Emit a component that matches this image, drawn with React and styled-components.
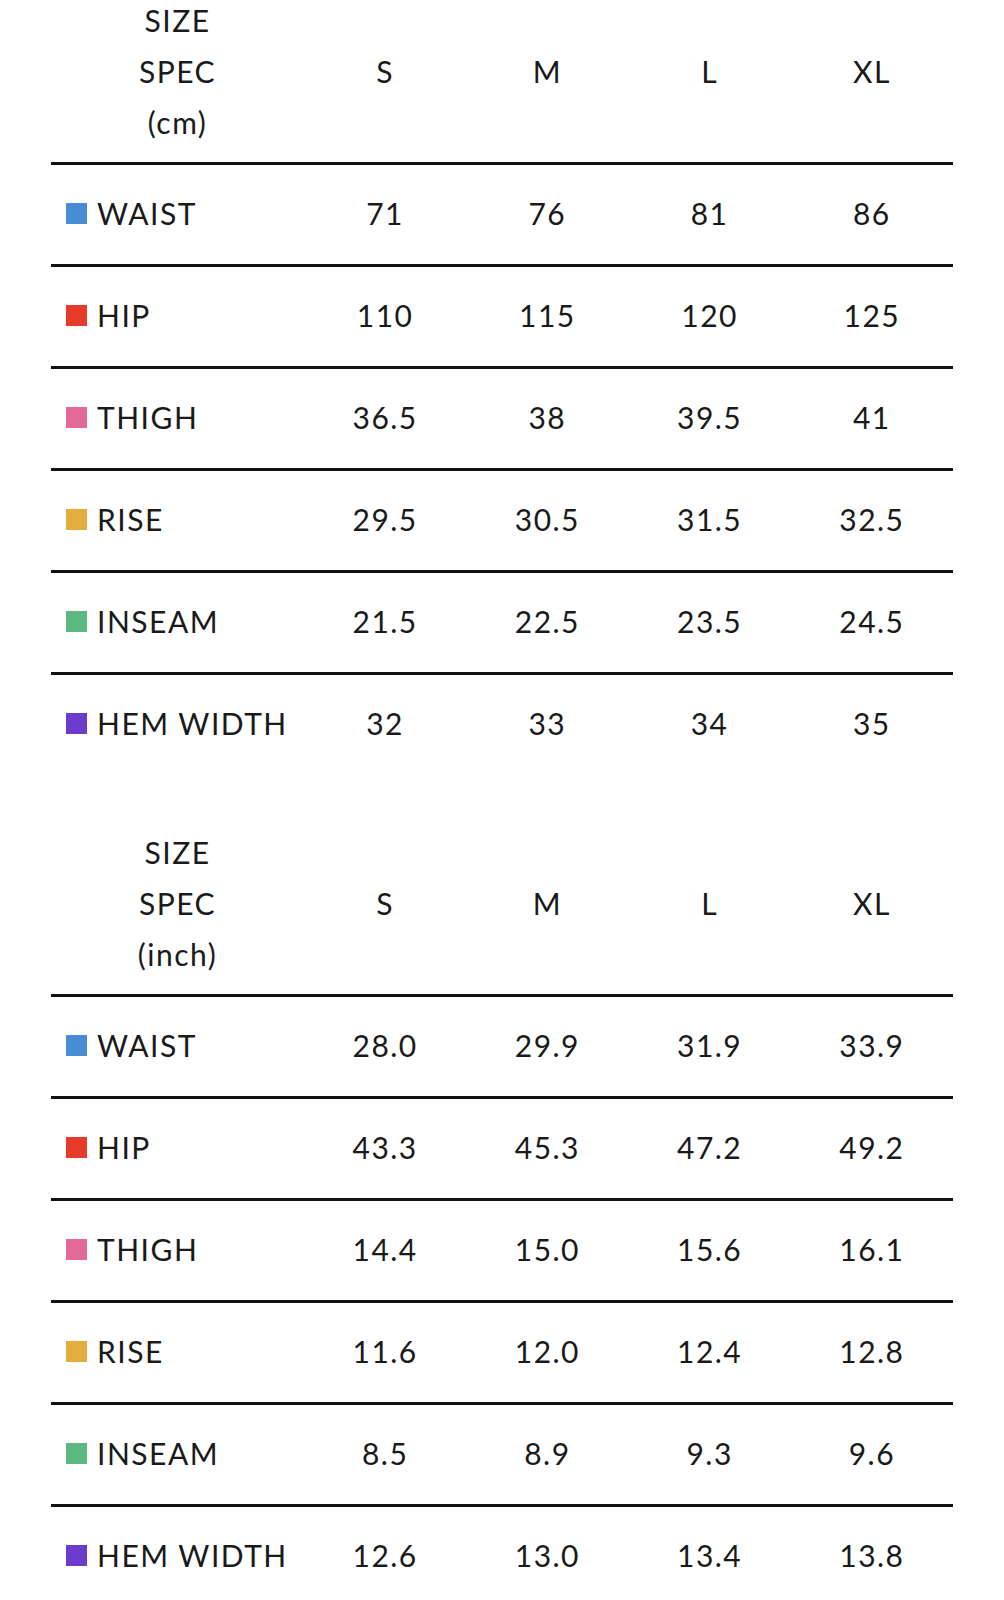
import React from 'react';
import styled, { createGlobalStyle } from 'styled-components';

const GlobalStyle = createGlobalStyle`
  html, body {
    margin: 0;
    padding: 0;
    background: #ffffff;
  }
  body {
    font-family: Lato, "Open Sans", "Liberation Sans", sans-serif;
    font-weight: 400;
    color: #1a1a1a;
  }
`

const Page = styled.div`
  width: 1004px;
  height: 1600px;
  overflow: hidden;
  display: flex;
  flex-direction: column;
  gap: 53px;
  background: #fff;
`

const Table = styled.div`
  width: 902px;
  margin-left: 51px;
  margin-top: ${p => p.offset || 0}px;
`

const HeaderRow = styled.div`
  display: grid;
  grid-template-columns: 253px repeat(4, 1fr);
  align-items: center;
  padding-bottom: 14px;
  font-size: 30px;
  letter-spacing: 1.5px;
`

const SpecLabel = styled.div`
  text-align: center;
  line-height: 51px;
`

const SizeCell = styled.div`
  text-align: center;
  line-height: 51px;
`

const Row = styled.div`
  display: grid;
  grid-template-columns: 253px repeat(4, 1fr);
  align-items: center;
  box-sizing: border-box;
  height: 102px;
  padding-bottom: 3px;
  border-top: 3px solid #111;
  font-size: 30px;
  letter-spacing: 1.5px;
`

const Label = styled.div`
  display: flex;
  align-items: center;
  padding-left: 15px;
  white-space: nowrap;
`

const Swatch = styled.span`
  width: 21px;
  height: 21px;
  margin-right: 10px;
  flex-shrink: 0;
  background: ${p => p.color};
`

const Value = styled.div`
  text-align: center;
`

const measures = [
  { name: 'WAIST', color: '#4a8bd6' },
  { name: 'HIP', color: '#e83a2a' },
  { name: 'THIGH', color: '#e26a9a' },
  { name: 'RISE', color: '#e2ac3f' },
  { name: 'INSEAM', color: '#5bb981' },
  { name: 'HEM WIDTH', color: '#6a3bcc' },
]

const cm = [
  ['71', '76', '81', '86'],
  ['110', '115', '120', '125'],
  ['36.5', '38', '39.5', '41'],
  ['29.5', '30.5', '31.5', '32.5'],
  ['21.5', '22.5', '23.5', '24.5'],
  ['32', '33', '34', '35'],
]

const inch = [
  ['28.0', '29.9', '31.9', '33.9'],
  ['43.3', '45.3', '47.2', '49.2'],
  ['14.4', '15.0', '15.6', '16.1'],
  ['11.6', '12.0', '12.4', '12.8'],
  ['8.5', '8.9', '9.3', '9.6'],
  ['12.6', '13.0', '13.4', '13.8'],
]

const sizes = ['S', 'M', 'L', 'XL']

const SpecTable = ({ unit, data, offset }) => (
  <Table offset={offset}>
    <HeaderRow>
      <SpecLabel>
        SIZE<br />SPEC<br />({unit})
      </SpecLabel>
      {sizes.map(s => <SizeCell key={s}>{s}</SizeCell>)}
    </HeaderRow>
    {measures.map((m, i) => (
      <Row key={m.name}>
        <Label>
          <Swatch color={m.color} />
          {m.name}
        </Label>
        {data[i].map((v, j) => <Value key={j}>{v}</Value>)}
      </Row>
    ))}
  </Table>
)

export default function App() {
  return (
    <>
      <GlobalStyle />
      <Page>
        <SpecTable unit="cm" data={cm} offset={-5} />
        <SpecTable unit="inch" data={inch} />
      </Page>
    </>
  )
}
